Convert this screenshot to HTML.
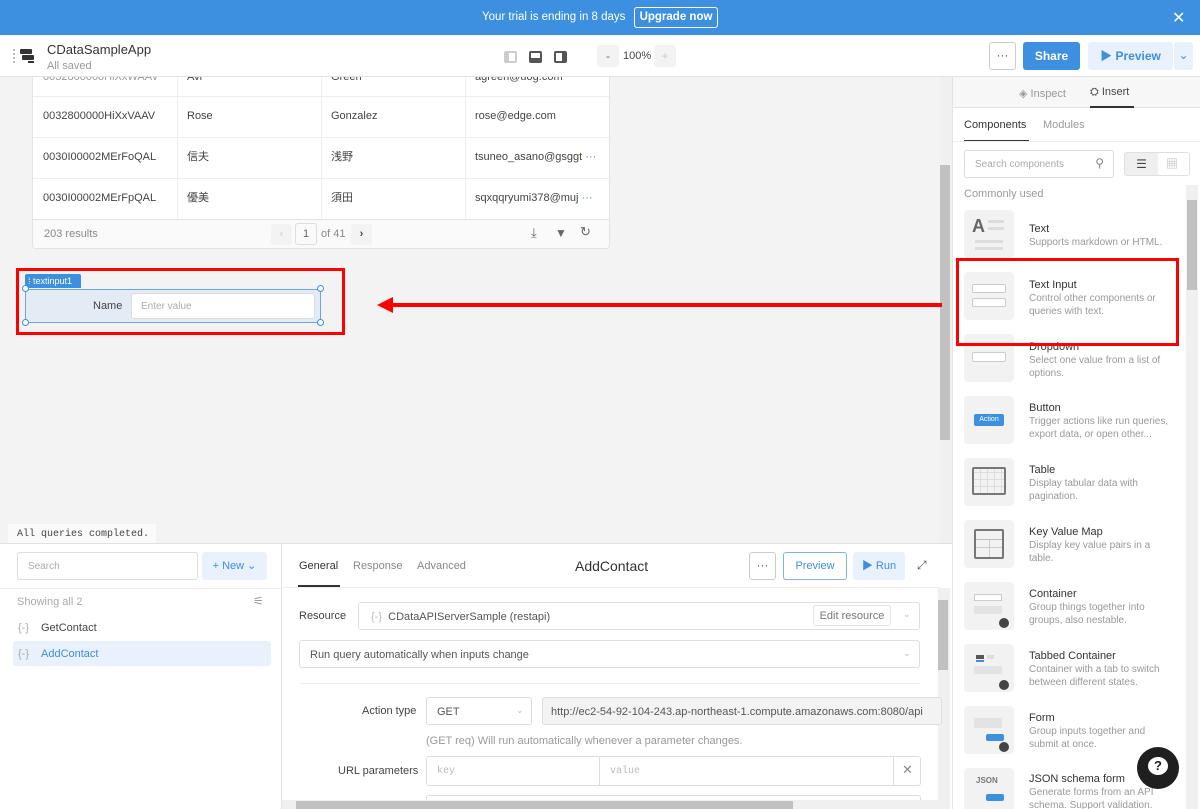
<!DOCTYPE html>
<html><head><meta charset="utf-8"><style>
*{box-sizing:border-box;margin:0;padding:0}
html,body{width:1200px;height:809px;overflow:hidden}
body{font-family:"Liberation Sans","Noto Sans CJK JP",sans-serif;font-size:11px;color:#333;background:#f3f3f3;position:relative}
.a{position:absolute}
.banner{left:0;top:0;width:1200px;height:35px;background:#3d8fe0;color:#fff;font-size:11.5px}
.hdr{left:0;top:35px;width:1200px;height:42px;background:#fff;border-bottom:1px solid #e3e3e3}
.btn{position:absolute;border-radius:3px;font-size:12px;text-align:center}
.cell{position:absolute;font-size:11px;color:#444;line-height:14px;height:14px;white-space:nowrap}
.comp .ic{position:absolute;left:964px;width:50px;height:48px;background:#f2f2f2;border-radius:4px}
.ti{position:absolute;left:1029px;font-size:11px;color:#333}
.ds{position:absolute;left:1029px;font-size:10px;color:#999;line-height:13px;width:145px}
.inp{position:absolute;background:#fff;border:1px solid #ddd;border-radius:3px}
.ph{color:#aaa}
</style></head><body>
<div class="a banner">
 <div class="a" style="left:482px;top:11px">Your trial is ending in 8 days</div>
 <div class="a" style="left:634px;top:7px;width:84px;height:21px;border:1px solid #fff;border-radius:3px;text-align:center;line-height:19px;font-weight:bold">Upgrade now</div>
 <div class="a" style="left:1172px;top:8px;font-size:16px">✕</div>
</div>
<div class="a hdr">
 <div class="a" style="left:13px;top:14px;width:2px;height:14px;border-left:2px dotted #bbb"></div>
 <div class="a" style="left:20px;top:14px;width:12px;height:5px;background:#333;border-radius:1px"></div>
 <div class="a" style="left:22px;top:20px;width:12px;height:5px;background:#333;border-radius:1px"></div>
 <div class="a" style="left:28px;top:26px;width:6px;height:2px;background:#333"></div>
 <div class="a" style="left:47px;top:7px;font-size:13px;color:#333">CDataSampleApp</div>
 <div class="a" style="left:47px;top:25px;font-size:11px;color:#999">All saved</div>
 <div class="a" style="left:504px;top:16px;width:13px;height:12px;border:2px solid #ccc;border-radius:2px;border-left-width:5px"></div>
 <div class="a" style="left:529px;top:16px;width:13px;height:12px;border:2px solid #555;border-radius:2px;border-bottom-width:5px"></div>
 <div class="a" style="left:554px;top:16px;width:13px;height:12px;border:2px solid #555;border-radius:2px;border-right-width:5px"></div>
 <div class="btn" style="left:597px;top:10px;width:22px;height:22px;background:#f3f3f3;line-height:22px;color:#666">-</div>
 <div class="a" style="left:623px;top:15px;font-size:11px;color:#444">100%</div>
 <div class="btn" style="left:654px;top:10px;width:22px;height:22px;background:#f3f3f3;line-height:22px;color:#ccc">+</div>
 <div class="btn" style="left:989px;top:7px;width:27px;height:28px;border:1px solid #ccc;line-height:24px;color:#555">···</div>
 <div class="btn" style="left:1023px;top:7px;width:57px;height:28px;background:#3d8fe0;color:#fff;font-weight:bold;line-height:28px">Share</div>
 <div class="btn" style="left:1088px;top:7px;width:85px;height:28px;background:#e8f1fc;color:#3d8fe0;font-weight:bold;line-height:28px">▶ Preview</div>
 <div class="btn" style="left:1173px;top:7px;width:20px;height:28px;background:#e8f1fc;color:#3d8fe0;line-height:26px;border-left:1px solid #fff">⌄</div>
</div>
<!-- canvas -->
<div class="a" style="left:940px;top:77px;width:12px;height:466px;background:#f0f0f0"></div>
<div class="a" style="left:940px;top:165px;width:10px;height:275px;background:#c1c1c1"></div>
<div class="a" style="left:32px;top:77px;width:578px;height:172px;background:#fff;border:1px solid #e3e3e3;border-top:none;border-radius:0 0 4px 4px;overflow:hidden">
 <div class="a" style="left:0;top:19px;width:578px;border-top:1px solid #eee"></div>
 <div class="a" style="left:0;top:60px;width:578px;border-top:1px solid #eee"></div>
 <div class="a" style="left:0;top:101px;width:578px;border-top:1px solid #eee"></div>
 <div class="a" style="left:0;top:142px;width:578px;height:30px;border-top:1px solid #e3e3e3;background:#fafafa"></div>
 <div class="a" style="left:144px;top:0;height:142px;border-left:1px solid #eee"></div>
 <div class="a" style="left:288px;top:0;height:142px;border-left:1px solid #eee"></div>
 <div class="a" style="left:432px;top:0;height:142px;border-left:1px solid #eee"></div>
 <div class="cell" style="left:10px;top:-7px;color:#999">0032800000HiXxWAAV</div><div class="cell" style="left:154px;top:-7px">Avi</div><div class="cell" style="left:298px;top:-7px">Green</div><div class="cell" style="left:442px;top:-7px">agreen@uog.com</div>
 <div class="cell" style="left:10px;top:32px">0032800000HiXxVAAV</div><div class="cell" style="left:154px;top:32px">Rose</div><div class="cell" style="left:298px;top:32px">Gonzalez</div><div class="cell" style="left:442px;top:32px">rose@edge.com</div>
 <div class="cell" style="left:10px;top:73px">0030I00002MErFoQAL</div><div class="cell" style="left:154px;top:73px">信夫</div><div class="cell" style="left:298px;top:73px">浅野</div><div class="cell" style="left:442px;top:73px">tsuneo_asano@gsggt <span style="color:#3d8fe0">···</span></div>
 <div class="cell" style="left:10px;top:114px">0030I00002MErFpQAL</div><div class="cell" style="left:154px;top:114px">優美</div><div class="cell" style="left:298px;top:114px">須田</div><div class="cell" style="left:442px;top:114px">sqxqqryumi378@muj <span style="color:#3d8fe0">···</span></div>
 <div class="cell" style="left:11px;top:150px;color:#888">203 results</div>
 <div class="a" style="left:238px;top:147px;width:21px;height:21px;background:#f3f3f3;border-radius:3px;color:#ccc;text-align:center;line-height:21px">‹</div>
 <div class="a" style="left:262px;top:146px;width:22px;height:22px;border:1px solid #ddd;border-radius:3px;text-align:center;line-height:20px;color:#666">1</div>
 <div class="cell" style="left:288px;top:150px;color:#888">of 41</div>
 <div class="a" style="left:318px;top:147px;width:21px;height:21px;background:#f3f3f3;border-radius:3px;color:#444;text-align:center;line-height:21px;font-weight:bold">›</div>
 <div class="cell" style="left:498px;top:149px;color:#666;font-size:13px">⤓</div>
 <div class="cell" style="left:522px;top:149px;color:#666;font-size:12px">▼</div>
 <div class="cell" style="left:547px;top:148px;color:#666;font-size:13px">↻</div>
</div>
<div class="a" style="left:16px;top:268px;width:329px;height:67px;border:3px solid #f00"></div>
<div class="a" style="left:25px;top:274px;width:56px;height:14px;background:#3d8fe0;color:#fff;font-size:9px;line-height:14px;padding-left:3px;border-radius:2px 2px 0 0">⁞ textinput1</div>
<div class="a" style="left:25px;top:289px;width:296px;height:34px;background:#e3ebf4;border:1px solid #6aa6e6"></div>
<div class="a" style="left:93px;top:300px;font-size:11px;color:#444">Name</div>
<div class="a inp" style="left:131px;top:293px;width:184px;height:26px;padding:7px 9px;font-size:10px"><span class="ph">Enter value</span></div>
<div class="a" style="left:22px;top:285px;width:7px;height:7px;border:1px solid #3d8fe0;border-radius:50%;background:#fff"></div>
<div class="a" style="left:317px;top:285px;width:7px;height:7px;border:1px solid #3d8fe0;border-radius:50%;background:#fff"></div>
<div class="a" style="left:22px;top:319px;width:7px;height:7px;border:1px solid #3d8fe0;border-radius:50%;background:#fff"></div>
<div class="a" style="left:317px;top:319px;width:7px;height:7px;border:1px solid #3d8fe0;border-radius:50%;background:#fff"></div>
<div class="a" style="left:390px;top:303px;width:552px;height:4px;background:#f00"></div>
<div class="a" style="left:377px;top:297px;width:0;height:0;border-top:8px solid transparent;border-bottom:8px solid transparent;border-right:16px solid #f00"></div>
<div class="a" style="left:8px;top:524px;width:148px;height:20px;background:#fafafa;font-family:'Liberation Mono',monospace;font-size:10px;padding:5px 0 0 9px;color:#444">All queries completed.</div>
<!-- bottom panel -->
<div class="a" style="left:0;top:543px;width:952px;height:266px;background:#fff;border-top:1px solid #e0e0e0"></div>
<div class="a" style="left:281px;top:544px;height:265px;border-left:1px solid #e3e3e3"></div>
<div class="a inp" style="left:17px;top:552px;width:181px;height:28px;padding:8px 10px;font-size:10px"><span class="ph">Search</span></div>
<div class="btn" style="left:202px;top:552px;width:65px;height:28px;background:#e8f1fc;color:#3d8fe0;line-height:28px;font-size:11px">+ New ⌄</div>
<div class="a" style="left:0;top:588px;width:281px;border-top:1px solid #eee"></div>
<div class="a" style="left:17px;top:596px;color:#aaa">Showing all 2</div>
<div class="a" style="left:253px;top:594px;color:#999;font-size:12px">⚟</div>
<div class="a" style="left:18px;top:622px;color:#aaa">{-}</div><div class="a" style="left:41px;top:622px;color:#444">GetContact</div>
<div class="a" style="left:13px;top:641px;width:258px;height:25px;background:#e8f1fc;border-radius:3px"></div>
<div class="a" style="left:18px;top:648px;color:#aaa">{-}</div><div class="a" style="left:41px;top:648px;color:#3d8fe0">AddContact</div>
<div class="a" style="left:299px;top:560px;color:#333">General</div>
<div class="a" style="left:298px;top:585px;width:42px;height:2px;background:#333"></div>
<div class="a" style="left:353px;top:560px;color:#888">Response</div>
<div class="a" style="left:417px;top:560px;color:#888">Advanced</div>
<div class="a" style="left:282px;top:587px;width:658px;border-top:1px solid #eee"></div>
<div class="a" style="left:575px;top:558px;font-size:14px;color:#333">AddContact</div>
<div class="btn" style="left:749px;top:552px;width:27px;height:28px;border:1px solid #ccc;line-height:24px;color:#555">···</div>
<div class="btn" style="left:783px;top:552px;width:64px;height:28px;border:1px solid #7db2ec;line-height:26px;color:#3d8fe0;font-size:11px">Preview</div>
<div class="btn" style="left:853px;top:552px;width:52px;height:28px;background:#e8f1fc;line-height:28px;color:#3d8fe0;font-size:11px">▶ Run</div>
<div class="a" style="left:917px;top:558px;color:#555;font-size:12px">⤢</div>
<div class="a" style="left:938px;top:588px;width:12px;height:221px;background:#f0f0f0"></div>
<div class="a" style="left:938px;top:600px;width:10px;height:70px;background:#c1c1c1"></div>
<div class="a" style="left:299px;top:610px;color:#444">Resource</div>
<div class="a inp" style="left:358px;top:602px;width:562px;height:28px;padding:8px 12px;color:#555"><span style="color:#bbb">{-}</span>&nbsp; CDataAPIServerSample (restapi)</div>
<div class="a" style="left:813px;top:605px;width:78px;height:21px;border:1px solid #e3e3e3;border-radius:3px;color:#777;text-align:center;line-height:20px">Edit resource</div>
<div class="a" style="left:903px;top:609px;color:#bbb;font-size:9px">⌄</div>
<div class="a inp" style="left:299px;top:640px;width:621px;height:28px;padding:8px 10px;color:#555">Run query automatically when inputs change</div>
<div class="a" style="left:903px;top:648px;color:#bbb;font-size:9px">⌄</div>
<div class="a" style="left:299px;top:683px;width:621px;border-top:1px solid #eee"></div>
<div class="a" style="left:362px;top:705px;color:#444">Action type</div>
<div class="a inp" style="left:426px;top:697px;width:106px;height:28px;padding:8px 10px;color:#555">GET</div>
<div class="a" style="left:516px;top:705px;color:#bbb;font-size:9px">⌄</div>
<div class="a" style="left:542px;top:697px;width:400px;height:28px;background:#f3f3f3;border:1px solid #ddd;border-radius:3px;padding:8px 8px;color:#555;white-space:nowrap;overflow:hidden">http://ec2-54-92-104-243.ap-northeast-1.compute.amazonaws.com:8080/api</div>
<div class="a" style="left:426px;top:735px;color:#999">(GET req) Will run automatically whenever a parameter changes.</div>
<div class="a" style="left:338px;top:765px;color:#444">URL parameters</div>
<div class="a inp" style="left:426px;top:756px;width:495px;height:30px"></div>
<div class="a" style="left:437px;top:766px;color:#bbb;font-family:'Liberation Mono',monospace;font-size:10px">key</div>
<div class="a" style="left:599px;top:757px;height:28px;border-left:1px solid #ddd"></div>
<div class="a" style="left:610px;top:766px;color:#bbb;font-family:'Liberation Mono',monospace;font-size:10px">value</div>
<div class="a" style="left:893px;top:757px;height:28px;border-left:1px solid #ddd"></div>
<div class="a" style="left:902px;top:762px;color:#888;font-size:13px">✕</div>
<div class="a inp" style="left:426px;top:795px;width:495px;height:14px;border-bottom:none"></div>
<div class="a" style="left:282px;top:800px;width:656px;height:9px;background:#f0f0f0"></div>
<div class="a" style="left:296px;top:801px;width:497px;height:8px;background:#c1c1c1"></div>
<!-- right panel -->
<div class="a" style="left:952px;top:77px;width:248px;height:732px;background:#fff;border-left:1px solid #e3e3e3"></div>
<div class="a" style="left:953px;top:77px;width:247px;height:31px;background:#f7f7f7;border-bottom:1px solid #e3e3e3"></div>
<div class="a" style="left:1019px;top:87px;color:#999;font-size:11px">◈ Inspect</div>
<div class="a" style="left:1090px;top:86px;color:#444;font-size:11px">⛭ Insert</div>
<div class="a" style="left:1090px;top:106px;width:44px;height:2px;background:#333"></div>
<div class="a" style="left:964px;top:119px;color:#333">Components</div>
<div class="a" style="left:1043px;top:119px;color:#999">Modules</div>
<div class="a" style="left:964px;top:140px;width:65px;height:2px;background:#333"></div>
<div class="a" style="left:953px;top:141px;width:247px;border-top:1px solid #eee"></div>
<div class="a inp" style="left:964px;top:150px;width:150px;height:28px;padding:8px 10px;font-size:10px"><span class="ph">Search components</span><span style="position:absolute;right:9px;top:5px;color:#888;font-size:12px">⚲</span></div>
<div class="a" style="left:1124px;top:152px;width:66px;height:24px;border:1px solid #e0e0e0;border-radius:3px"></div>
<div class="a" style="left:1125px;top:153px;width:33px;height:22px;background:#efefef;color:#444;text-align:center;line-height:22px;font-size:12px">☰</div>
<div class="a" style="left:1166px;top:155px;color:#bbb;font-size:12px">▦</div>
<div class="a" style="left:964px;top:188px;color:#999">Commonly used</div>
<div class="a" style="left:1186px;top:185px;width:12px;height:624px;background:#f0f0f0"></div>
<div class="a" style="left:1187px;top:200px;width:10px;height:90px;background:#c1c1c1"></div>
<div class="comp">
 <div class="ic" style="top:210px"><div class="a" style="left:8px;top:6px;font-size:18px;font-weight:bold;color:#666">A</div><div class="a" style="left:24px;top:10px;width:16px;height:3px;background:#ddd"></div><div class="a" style="left:24px;top:17px;width:16px;height:3px;background:#ddd"></div><div class="a" style="left:11px;top:30px;width:28px;height:3px;background:#ddd"></div><div class="a" style="left:11px;top:37px;width:28px;height:3px;background:#ddd"></div></div>
 <div class="ti" style="top:223px">Text</div><div class="ds" style="top:236px">Supports markdown or HTML.</div>
 <div class="ic" style="top:272px"><div class="a" style="left:8px;top:12px;width:34px;height:9px;background:#fff;border:1px solid #ccc;border-radius:2px"></div><div class="a" style="left:8px;top:26px;width:34px;height:9px;background:#fff;border:1px solid #ccc;border-radius:2px"></div></div>
 <div class="ti" style="top:279px">Text Input</div><div class="ds" style="top:292px">Control other components or queries with text.</div>
 <div class="ic" style="top:334px"><div class="a" style="left:8px;top:18px;width:34px;height:10px;background:#fff;border:1px solid #ccc;border-radius:2px"></div></div>
 <div class="ti" style="top:341px">Dropdown</div><div class="ds" style="top:354px">Select one value from a list of options.</div>
 <div class="ic" style="top:396px"><div class="a" style="left:10px;top:18px;width:30px;height:12px;background:#3d8fe0;border-radius:2px;color:#fff;font-size:7px;text-align:center;line-height:12px">Action</div></div>
 <div class="ti" style="top:402px">Button</div><div class="ds" style="top:415px">Trigger actions like run queries, export data, or open other...</div>
 <div class="ic" style="top:458px"><div class="a" style="left:8px;top:9px;width:34px;height:28px;border:2px solid #777;border-radius:2px;background:repeating-linear-gradient(90deg,transparent 0 6px,#ddd 6px 7px),repeating-linear-gradient(0deg,transparent 0 6px,#ddd 6px 7px)"></div></div>
 <div class="ti" style="top:464px">Table</div><div class="ds" style="top:477px">Display tabular data with pagination.</div>
 <div class="ic" style="top:520px"><div class="a" style="left:10px;top:9px;width:30px;height:30px;border:2px solid #777;border-radius:2px;background:linear-gradient(#bbb,#bbb) 0 8px/100% 1px no-repeat,linear-gradient(#ccc,#ccc) 0 16px/100% 1px no-repeat,linear-gradient(#ccc,#ccc) 13px 8px/1px 100% no-repeat"></div></div>
 <div class="ti" style="top:526px">Key Value Map</div><div class="ds" style="top:539px">Display key value pairs in a table.</div>
 <div class="ic" style="top:582px"><div class="a" style="left:10px;top:12px;width:28px;height:7px;border:1px solid #ccc;background:#fff"></div><div class="a" style="left:10px;top:24px;width:28px;height:8px;background:#e3e3e3"></div><div class="a" style="left:35px;top:36px;width:10px;height:10px;border-radius:50%;background:#444"></div></div>
 <div class="ti" style="top:588px">Container</div><div class="ds" style="top:601px">Group things together into groups, also nestable.</div>
 <div class="ic" style="top:644px"><div class="a" style="left:12px;top:11px;width:8px;height:4px;background:#555"></div><div class="a" style="left:12px;top:16px;width:8px;height:2px;background:#3d8fe0"></div><div class="a" style="left:23px;top:11px;width:7px;height:4px;background:#ddd"></div><div class="a" style="left:10px;top:22px;width:28px;height:8px;background:#e3e3e3"></div><div class="a" style="left:35px;top:36px;width:10px;height:10px;border-radius:50%;background:#444"></div></div>
 <div class="ti" style="top:650px">Tabbed Container</div><div class="ds" style="top:663px">Container with a tab to switch between different states.</div>
 <div class="ic" style="top:706px"><div class="a" style="left:10px;top:12px;width:28px;height:10px;background:#e3e3e3"></div><div class="a" style="left:22px;top:28px;width:18px;height:7px;background:#3d8fe0;border-radius:2px"></div><div class="a" style="left:35px;top:36px;width:10px;height:10px;border-radius:50%;background:#444"></div></div>
 <div class="ti" style="top:712px">Form</div><div class="ds" style="top:725px">Group inputs together and submit at once.</div>
 <div class="ic" style="top:768px"><div class="a" style="left:12px;top:8px;font-size:8px;font-weight:bold;color:#777">JSON</div><div class="a" style="left:22px;top:26px;width:18px;height:7px;background:#3d8fe0;border-radius:2px"></div></div>
 <div class="ti" style="top:773px">JSON schema form</div><div class="ds" style="top:786px">Generate forms from an API schema. Support validation.</div>
</div>
<div class="a" style="left:956px;top:258px;width:223px;height:88px;border:3px solid #f00"></div>
<div class="a" style="left:1137px;top:747px;width:42px;height:42px;border-radius:50%;background:#1f1f1f"></div>
<div class="a" style="left:1148px;top:757px;width:20px;height:18px;border-radius:50%;background:#fff;color:#1f1f1f;font-weight:bold;font-size:13px;text-align:center;line-height:18px">?</div>
</body></html>
